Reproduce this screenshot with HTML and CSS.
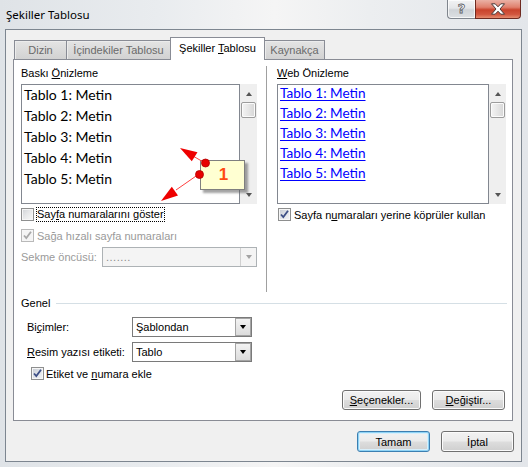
FILE: index.html
```html
<!DOCTYPE html>
<html lang="tr">
<head>
<meta charset="utf-8">
<title>Şekiller Tablosu</title>
<link rel="stylesheet" href="styles.css">
</head>
<body>
<div class="window">
  <div class="titlebar">
    <span class="title">Şekiller Tablosu</span>
    <div class="caption">
      <div class="cbtn help"><span class="q">?</span></div>
      <div class="cbtn close">
        <svg width="16" height="12" viewBox="0 0 16 12"><path d="M1.5 0.8 H5.2 L8 3.8 L10.8 0.8 H14.5 L10 6 L14.5 11.2 H10.8 L8 8.2 L5.2 11.2 H1.5 L6 6 Z" fill="#fff" stroke="#4a3a38" stroke-width="1"/></svg>
      </div>
    </div>
  </div>
  <div class="client">
    <div class="tabs">
      <div class="tab t1">Dizin</div>
      <div class="tab t2">İçindekiler Tablosu</div>
      <div class="tab t3 active">Şekiller <u>T</u>ablosu</div>
      <div class="tab t4">Kaynakça</div>
    </div>
    <div class="panel">
      <div class="top">
        <div class="col col-left">
          <div class="label">Baskı <u>Ö</u>nizleme</div>
          <div class="listwrap">
            <div class="list list-print">
              <div class="row">Tablo 1: Metin</div>
              <div class="row">Tablo 2: Metin</div>
              <div class="row">Tablo 3: Metin</div>
              <div class="row">Tablo 4: Metin</div>
              <div class="row">Tablo 5: Metin</div>
            </div>
            <div class="scrollbar">
              <div class="arrow up"></div>
              <div class="thumb"></div>
              <div class="arrow down"></div>
            </div>
          </div>
          <div class="check-row r-show">
            <span class="cb"></span>
            <span class="focus">Say<u>f</u>a numaralarını göster</span>
          </div>
          <div class="check-row r-right disabled">
            <span class="cb checked dis"><svg width="11" height="11" viewBox="0 0 11 11"><path d="M2 5.5 L4.3 8 L9 1.8" fill="none" stroke="#a8a8a8" stroke-width="1.8"/></svg></span>
            <span class="ctext">Sağa hızalı sayfa numaraları</span>
          </div>
          <div class="field-row r-tab disabled">
            <span class="flabel">Sekme öncüsü:</span>
            <div class="combo dis w-tab">
              <span class="ctext">.......</span>
              <span class="dd"><span class="tri"></span></span>
            </div>
          </div>
        </div>
        <div class="col col-right">
          <div class="label"><u>W</u>eb Önizleme</div>
          <div class="listwrap">
            <div class="list list-web">
              <div class="row"><a>Tablo 1: Metin</a></div>
              <div class="row"><a>Tablo 2: Metin</a></div>
              <div class="row"><a>Tablo 3: Metin</a></div>
              <div class="row"><a>Tablo 4: Metin</a></div>
              <div class="row"><a>Tablo 5: Metin</a></div>
            </div>
            <div class="scrollbar">
              <div class="arrow up"></div>
              <div class="thumb"></div>
              <div class="arrow down"></div>
            </div>
          </div>
          <div class="check-row r-web">
            <span class="cb checked"><svg width="11" height="11" viewBox="0 0 11 11"><path d="M2 5.5 L4.3 8 L9 1.8" fill="none" stroke="#3d4f86" stroke-width="1.8"/></svg></span>
            <span class="ctext">Sayfa n<u>u</u>maraları yerine köprüler kullan</span>
          </div>
        </div>
      </div>
      <div class="lower">
        <div class="group-title"><span>Genel</span><span class="gline"></span></div>
        <div class="form-row r-fmt">
          <span class="flabel wide">Bi<u>ç</u>imler:</span>
          <div class="combo w-fmt">
            <span class="ctext">Şablondan</span>
            <span class="dd"><span class="tri"></span></span>
          </div>
        </div>
        <div class="form-row r-cap">
          <span class="flabel wide"><u>R</u>esim yazısı etiketi:</span>
          <div class="combo w-fmt">
            <span class="ctext">Tablo</span>
            <span class="dd"><span class="tri"></span></span>
          </div>
        </div>
        <div class="check-row r-label">
          <span class="cb checked"><svg width="11" height="11" viewBox="0 0 11 11"><path d="M2 5.5 L4.3 8 L9 1.8" fill="none" stroke="#3d4f86" stroke-width="1.8"/></svg></span>
          <span class="ctext">Etiket ve <u>n</u>umara ekle</span>
        </div>
        <div class="btn-row">
          <div class="btn b-opt"><u>S</u>eçenekler...</div>
          <div class="btn b-mod"><u>D</u>eğiştir...</div>
        </div>
      </div>
    </div>
    <div class="bottom">
      <div class="btn default b-ok">Tamam</div>
      <div class="btn b-cancel">İptal</div>
    </div>
  </div>
  <div class="callout">1</div>
  <svg class="annot" width="528" height="467" viewBox="0 0 528 467">
    <line x1="205" y1="163" x2="193" y2="156" stroke="#ff4040" stroke-width="1"/>
    <polygon points="180,148 197.5,152.2 191.8,161.2" fill="#ee0000"/>
    <line x1="199" y1="174" x2="176" y2="190" stroke="#ff4040" stroke-width="1"/>
    <polygon points="161,201 178,195.6 171.8,186.8" fill="#ee0000"/>
    <circle cx="205.5" cy="163" r="4" fill="#e80000" stroke="#b00000" stroke-width="0.8"/>
    <circle cx="199.5" cy="174.5" r="4" fill="#e80000" stroke="#b00000" stroke-width="0.8"/>
  </svg>
</div>
</body>
</html>
```
FILE: styles.css
```css
html, body {
  margin: 0;
  padding: 0;
}
body {
  background: #eef0f2;
  font-family: "Liberation Sans", Arial, sans-serif;
  font-size: 11px;
  color: #000;
}
u { text-decoration: underline; text-underline-offset: 1px; }

.window {
  position: relative;
  width: 528px;
  height: 467px;
  overflow: hidden;
  background: linear-gradient(90deg, #dfe3e7 0%, #e9ecef 30%, #f5f5f5 52%, #eceef0 70%, #e3e6ea 100%);
}

/* title bar */
.titlebar {
  height: 29px;
  display: flex;
  justify-content: space-between;
  align-items: flex-start;
}
.title {
  font-family: "Noto Sans", "Open Sans", sans-serif;
  font-size: 11.5px;
  line-height: 16px;
  margin: 7px 0 0 6px;
  color: #000;
}
.caption {
  display: flex;
  margin-right: 7px;
}
.cbtn {
  height: 19px;
  box-sizing: border-box;
  display: flex;
  align-items: center;
  justify-content: center;
}
.help {
  width: 28px;
  border: 1px solid #7f858d;
  border-top: none;
  border-right: none;
  border-radius: 0 0 0 4px;
  background: linear-gradient(#f2f3f4 0%, #e4e6e8 45%, #cfd3d7 55%, #dde0e3 100%);
  box-shadow: inset 0 0 0 1px rgba(255,255,255,0.7);
}
.q {
  font-family: "DejaVu Sans", sans-serif;
  font-size: 13px;
  font-weight: bold;
  color: #fff;
  -webkit-text-stroke: 0.8px #5c6066;
  line-height: 14px;
}
.close {
  width: 46px;
  border: 1px solid #6e2a20;
  border-top: none;
  border-radius: 0 0 4px 0;
  background: linear-gradient(#eab1a5 0%, #e0806d 40%, #c9432c 55%, #d2563e 80%, #e58c6f 100%);
}

/* client */
.client {
  margin-left: 5px;
  width: 517px;
  height: 433px;
  box-sizing: border-box;
  border: 1px solid #7d8690;
  background: #f0f0f0;
  padding: 7px 0 0 7px;
}

/* tabs */
.tabs {
  display: flex;
  align-items: flex-end;
  height: 22px;
  margin-left: 1px;
  position: relative;
  z-index: 1;
}
.tab {
  height: 19px;
  box-sizing: border-box;
  border: 1px solid #898c95;
  border-bottom: none;
  background: linear-gradient(#e4e4e4, #d2d2d2);
  box-shadow: inset 1px 1px 0 #ececec;
  color: #6a6a6a;
  text-align: center;
  line-height: 18px;
  white-space: nowrap;
}
.t1 { width: 53px; }
.t2 { width: 105px; margin-left: -1px; }
.t3 { width: 95px; margin-left: -1px; }
.t4 { width: 61px; margin-left: -1px; }
.tab.active {
  height: 23px;
  margin-bottom: -1px;
  background: #fff;
  box-shadow: none;
  color: #000;
  line-height: 21px;
  position: relative;
  z-index: 2;
}

/* panel */
.panel {
  width: 500px;
  height: 362px;
  box-sizing: border-box;
  border: 1px solid #898c95;
  background: #fff;
}
.top {
  display: flex;
  height: 232px;
}
.col-left {
  width: 252px;
  box-sizing: border-box;
  padding: 7px 9px 0 7px;
}
.col-right {
  flex: 1;
  margin-top: 6px;
  border-left: 1px solid #a0a0a0;
  padding: 1px 5px 0 10px;
}
.label {
  height: 13px;
  line-height: 13px;
}
.listwrap {
  display: flex;
  margin-top: 4px;
  height: 120px;
}
.list {
  box-sizing: border-box;
  height: 120px;
  border: 1px solid #828790;
  background: #fff;
  overflow: hidden;
}
.list-print { width: 219px; }
.list-web { width: 212px; }
.row {
  padding-left: 2px;
  font-family: Lato, "Open Sans", sans-serif;
  white-space: nowrap;
}
.list-print .row {
  height: 21px;
  line-height: 19px;
  font-size: 14px;
}
.list-web .row {
  height: 20px;
  line-height: 17px;
  font-size: 13.6px;
}
.list-web a {
  color: #0000ff;
  text-decoration: underline;
  text-underline-offset: 2px;
}
.scrollbar {
  width: 17px;
  height: 120px;
  background: #efefef;
  position: relative;
  display: flex;
  flex-direction: column;
  align-items: center;
}
.arrow {
  width: 0;
  height: 0;
  border-left: 3.5px solid transparent;
  border-right: 3.5px solid transparent;
}
.arrow.up {
  margin-top: 8px;
  border-bottom: 4px solid #555;
}
.arrow.down {
  margin-top: auto;
  margin-bottom: 7px;
  border-top: 4px solid #555;
}
.thumb {
  margin-top: 6px;
  width: 15px;
  height: 16px;
  box-sizing: border-box;
  border: 1px solid #9c9c9c;
  border-radius: 2px;
  background: linear-gradient(90deg, #f4f4f4, #e6e6e6 50%, #d6d6d6);
  box-shadow: inset 0 0 0 1px #fbfbfb;
}

/* checkboxes */
.check-row {
  display: flex;
  align-items: center;
  height: 15px;
}
.cb {
  width: 13px;
  height: 13px;
  box-sizing: border-box;
  border: 1px solid #8e8f8f;
  background: linear-gradient(135deg, #cfd2d6 0%, #e8e9ea 50%, #f8f8f8 100%);
  box-shadow: inset 0 0 0 1px #f6f6f6;
  display: flex;
  align-items: center;
  justify-content: center;
  flex: none;
}
.cb.checked {
  background: linear-gradient(135deg, #c5cad3 0%, #e2e5ea 55%, #f3f4f6 100%);
}
.cb.dis {
  border-color: #b9b9b9;
  background: #f4f4f4;
}
.cb svg { display: block; }
.ctext { margin-left: 3px; white-space: nowrap; }
.focus {
  margin-left: 2px;
  border: 1px dotted #000;
  line-height: 13px;
  padding: 0 0 0 0;
  white-space: nowrap;
}
.r-show { margin-top: 3px; }
.r-right { margin-top: 6px; }
.r-web { margin-top: 3px; margin-left: 1px; }
.disabled { color: #9a9a9a; }

/* fields */
.field-row, .form-row {
  display: flex;
  align-items: center;
}
.r-tab { margin-top: 4px; }
.r-tab .flabel { width: 81px; }
.combo {
  height: 20px;
  box-sizing: border-box;
  border: 1px solid #7a7a7a;
  background: #fff;
  display: flex;
  align-items: center;
  justify-content: space-between;
}
.combo .ctext { margin-left: 3px; }
.combo .dd {
  width: 16px;
  height: 18px;
  box-sizing: border-box;
  border: 1px solid #a4a4a4;
  background: linear-gradient(#f3f3f3, #dcdcdc);
  display: flex;
  align-items: center;
  justify-content: center;
}
.tri {
  width: 0;
  height: 0;
  border-left: 3.5px solid transparent;
  border-right: 3.5px solid transparent;
  border-top: 4px solid #000;
}
.combo.dis {
  border-color: #adb2b5;
  background: #f4f4f4;
}
.combo.dis .dd {
  border-color: #d0d0d0;
  background: #f4f4f4;
  border-top: none;
  border-bottom: none;
  border-right: none;
}
.combo.dis .tri { border-top-color: #a3a3a3; }
.combo.dis .ctext { color: #8a8a8a; letter-spacing: 0.5px; }
.w-tab { width: 155px; }
.w-fmt { width: 120px; }

/* lower part */
.lower {
  padding: 0 5px 0 7px;
}
.group-title {
  display: flex;
  align-items: center;
  height: 14px;
  margin-top: 4px;
}
.gline {
  flex: 1;
  height: 1px;
  background: #d5dfe5;
  margin-left: 6px;
}
.form-row { padding-left: 6px; }
.flabel.wide { width: 105px; }
.r-fmt { margin-top: 7px; }
.r-cap { margin-top: 5px; }
.r-label { margin-top: 4px; padding-left: 10px; }
.r-label .ctext { margin-left: 2px; }

/* buttons */
.btn-row {
  display: flex;
  justify-content: flex-end;
  gap: 11px;
  margin-top: 9px;
  padding-right: 2px;
}
.btn {
  height: 20px;
  box-sizing: border-box;
  border: 1px solid #707070;
  border-radius: 3px;
  background: linear-gradient(#f2f2f2 0%, #ebebeb 48%, #dddddd 52%, #cfcfcf 100%);
  box-shadow: inset 0 0 0 1px #fbfbfb;
  display: flex;
  align-items: center;
  justify-content: center;
  white-space: nowrap;
}
.b-opt { width: 79px; }
.b-mod { width: 73px; }
.bottom {
  display: flex;
  justify-content: flex-end;
  gap: 11px;
  margin-top: 10px;
  padding-right: 7px;
}
.b-ok, .b-cancel { width: 73px; height: 21px; }
.btn.default {
  border-color: #3c7fb1;
  box-shadow: inset 0 0 0 1px #8fd3f5, inset 0 0 0 2px #d8effb;
}

/* annotation overlay */
.callout {
  position: absolute;
  left: 200px;
  top: 160px;
  width: 45px;
  height: 30px;
  box-sizing: border-box;
  border: 1px solid #7f7f7f;
  background: #ffffd2;
  box-shadow: 3px 3px 2px rgba(90,90,90,0.55);
  font-family: "Liberation Sans", Arial, sans-serif;
  font-weight: bold;
  font-size: 17px;
  color: #ff4a12;
  display: flex;
  align-items: center;
  justify-content: center;
  padding-left: 2px;
}
.annot {
  position: absolute;
  left: 0;
  top: 0;
  pointer-events: none;
}
```
